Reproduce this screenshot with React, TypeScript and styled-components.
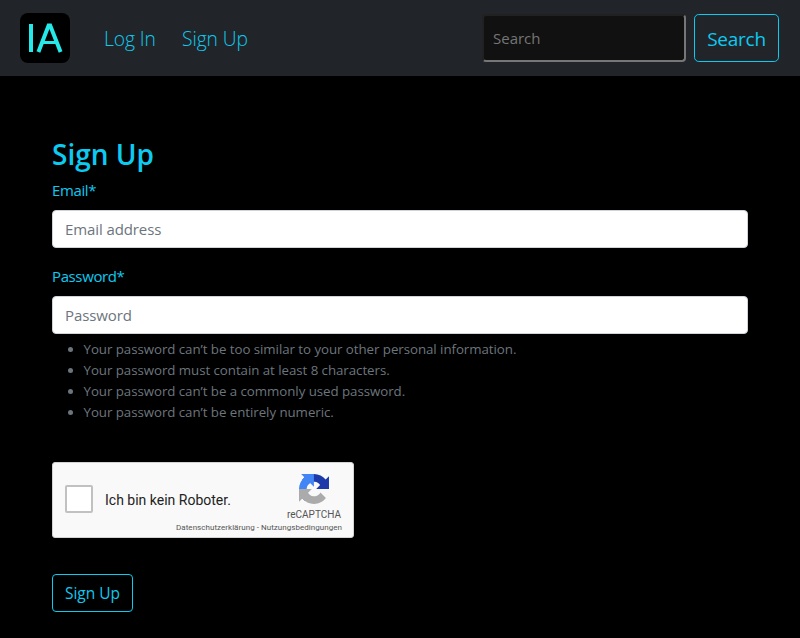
import React from "react";
import styled, { createGlobalStyle } from "styled-components";

const CYAN = "#0dcaf0";

const GlobalStyle = createGlobalStyle`
  *, *::before, *::after { box-sizing: border-box; }
  body {
    margin: 0;
    background: #000;
    color: ${CYAN};
    font-family: "Open Sans", "Noto Sans", sans-serif;
    font-size: 15px;
    line-height: 24px;
  }
`;

const Navbar = styled.nav`
  display: flex;
  align-items: center;
  height: 76px;
  padding: 0 21px 0 20px;
  background: #212529;
`;

const Brand = styled.a`
  display: block;
  width: 50px;
  height: 50px;
  margin-right: 34px;
`;

const NavLinks = styled.div`
  display: flex;
  flex: 1;
  gap: 26px;
  padding-top: 2px;
`;

const NavLink = styled.a<{ $width: number }>`
  width: ${(p) => p.$width}px;
  font-size: 19.3px;
  font-weight: 300;
  line-height: 30px;
  letter-spacing: -0.1px;
  white-space: nowrap;
  color: ${CYAN};
`;

const SearchForm = styled.form`
  display: flex;
  align-items: center;
  gap: 8px;
`;

const SearchInput = styled.input`
  width: 204px;
  height: 48px;
  padding: 0 9px;
  border: 2px solid;
  border-color: #212121 #767676 #767676 #212121;
  border-radius: 4px;
  background: #111;
  color: #fff;
  font: inherit;
  &::placeholder { color: #757575; opacity: 1; }
`;

const OutlineButton = styled.button<{ $large?: boolean }>`
  width: ${(p) => (p.$large ? 85 : 81)}px;
  height: ${(p) => (p.$large ? 48 : 38)}px;
  padding: ${(p) => (p.$large ? 2 : 1)}px 0 0;
  border: 1px solid ${CYAN};
  border-radius: ${(p) => (p.$large ? 4.8 : 4)}px;
  background: transparent;
  color: ${CYAN};
  font-family: inherit;
  font-size: ${(p) => (p.$large ? 19 : 15.5)}px;
  line-height: 1.5;
  letter-spacing: ${(p) => (p.$large ? -0.25 : 0)}px;
  white-space: nowrap;
`;

const Main = styled.main`
  padding: 59px 52px 0;
`;

const Title = styled.h1`
  margin: 0 0 5px;
  font-size: 28px;
  font-weight: 600;
  line-height: 38px;
`;

const Field = styled.div`
  display: flex;
  flex-direction: column;
  gap: 8px;
  margin-bottom: 16px;
`;

const Label = styled.label`
  height: 24px;
  line-height: 24px;
  letter-spacing: -0.38px;
`;

const TextInput = styled.input`
  width: 100%;
  height: 38px;
  padding: 6px 12px;
  border: 1px solid #ced4da;
  border-radius: 4px;
  background: #fff;
  font: inherit;
  letter-spacing: -0.1px;
  &::placeholder { color: #6c757d; opacity: 1; }
`;

const Hints = styled.ul`
  margin: -11px 0 0;
  padding-left: 31.5px;
  color: #6c757d;
  font-size: 13.3px;
  line-height: 21px;
  letter-spacing: -0.05px;
`;

const Captcha = styled.section`
  display: flex;
  width: 302px;
  height: 76px;
  margin: 39px 0 36px;
  border: 1px solid #d3d3d3;
  border-radius: 3px;
  background: #f9f9f9;
  color: #000;
  font-family: Roboto, sans-serif;
`;

const CheckBox = styled.span`
  width: 28px;
  height: 28px;
  margin: 22px 12px 0;
  border: 2px solid #c1c1c1;
  border-radius: 2px;
  background: #fff;
`;

const CaptchaLabel = styled.span`
  flex: 1;
  padding-top: 29px;
  font-size: 14px;
  line-height: 17px;
  white-space: nowrap;
  color: #222;
`;

const CaptchaBrand = styled.div`
  display: flex;
  flex-direction: column;
  align-items: flex-end;
  width: 100px;
  padding: 11px 11px 0 0;
  color: #555;
  white-space: nowrap;
`;

const CaptchaLogo = styled.svg`
  width: 30px;
  height: 30px;
  margin: 0 13px 1px 0;
`;

const CaptchaName = styled.span`
  margin: 4px 1px 0 0;
  font-size: 10px;
  line-height: 12px;
`;

const CaptchaLinks = styled.span`
  margin-top: 2px;
  font-size: 8px;
  line-height: 10px;
  letter-spacing: 0.04px;
`;

const HINTS = [
  "Your password can’t be too similar to your other personal information.",
  "Your password must contain at least 8 characters.",
  "Your password can’t be a commonly used password.",
  "Your password can’t be entirely numeric.",
];

function BrandMark() {
  return (
    <svg width="50" height="50" viewBox="0 0 50 50" aria-label="IA">
      <rect width="50" height="50" rx="8" fill="#000" />
      <g fill="none" stroke="#25e8e8" strokeWidth="4">
        <path d="M11 11V39" />
        <path d="M18.4 39L28.6 12.6H30.2L40.6 39" />
        <path d="M21.5 29.5H37" strokeWidth="3" />
      </g>
    </svg>
  );
}

function RecaptchaMark() {
  return (
    <CaptchaLogo viewBox="0 0 64 64">
      <path fill="#1c3aa9" d="M64 31.955l-.033-1.37V4.687l-7.16 7.16C50.948 4.674 42.033.093 32.05.093c-10.4 0-19.622 4.96-25.458 12.64l11.736 11.86a15.55 15.55 0 0 1 4.754-5.334c2.05-1.6 4.952-2.906 8.968-2.906.485 0 .86.057 1.135.163 4.976.393 9.288 3.14 11.828 7.124l-8.307 8.307L64 31.953" />
      <path fill="#4285f4" d="M31.862.094l-1.37.033H4.594l7.16 7.16C4.58 13.147 0 22.06 0 32.046c0 10.4 4.96 19.622 12.64 25.458L24.5 45.768a15.55 15.55 0 0 1-5.334-4.754c-1.6-2.05-2.906-4.952-2.906-8.968 0-.485.057-.86.163-1.135.393-4.976 3.14-9.288 7.124-11.828l8.307 8.307L31.86.095" />
      <path fill="#ababab" d="M.001 32.045l.033 1.37v25.898l7.16-7.16c5.86 7.173 14.774 11.754 24.76 11.754 10.4 0 19.622-4.96 25.458-12.64l-11.736-11.86a15.55 15.55 0 0 1-4.754 5.334c-2.05 1.6-4.952 2.906-8.968 2.906-.485 0-.86-.057-1.135-.163-4.976-.393-9.288-3.14-11.828-7.124l8.307-8.307c-10.522.04-22.4.066-27.295-.005" />
    </CaptchaLogo>
  );
}

export default function App() {
  return (
    <>
      <GlobalStyle />
      <Navbar>
        <Brand><BrandMark /></Brand>
        <NavLinks>
          <NavLink $width={52}>Log In</NavLink>
          <NavLink $width={66}>Sign Up</NavLink>
        </NavLinks>
        <SearchForm>
          <SearchInput placeholder="Search" />
          <OutlineButton $large type="button">Search</OutlineButton>
        </SearchForm>
      </Navbar>
      <Main>
        <Title>Sign Up</Title>
        <Field>
          <Label htmlFor="email">Email*</Label>
          <TextInput id="email" placeholder="Email address" />
        </Field>
        <Field>
          <Label htmlFor="password">Password*</Label>
          <TextInput id="password" type="password" placeholder="Password" />
        </Field>
        <Hints>
          {HINTS.map((hint) => <li key={hint}>{hint}</li>)}
        </Hints>
        <Captcha>
          <CheckBox />
          <CaptchaLabel>Ich bin kein Roboter.</CaptchaLabel>
          <CaptchaBrand>
            <RecaptchaMark />
            <CaptchaName>reCAPTCHA</CaptchaName>
            <CaptchaLinks>Datenschutzerklärung - Nutzungsbedingungen</CaptchaLinks>
          </CaptchaBrand>
        </Captcha>
        <OutlineButton type="button">Sign Up</OutlineButton>
      </Main>
    </>
  );
}
